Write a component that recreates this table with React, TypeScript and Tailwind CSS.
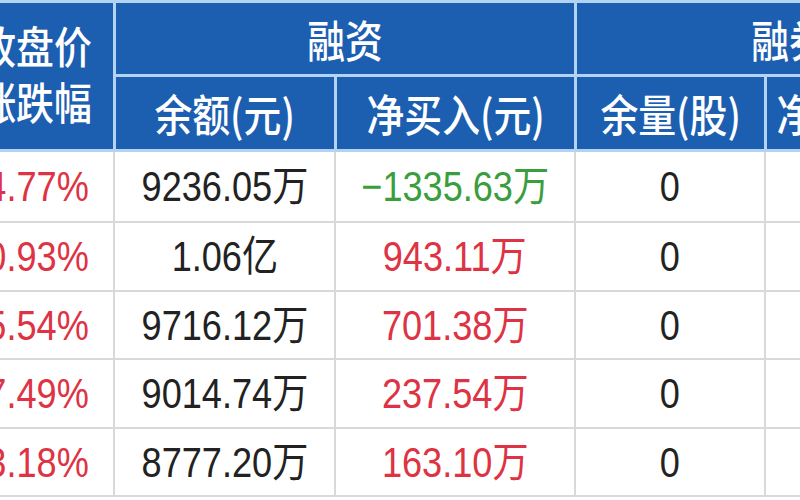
const rows = [
  { pct: "4.77%", bal: "9236.05万", net: "−1335.63万", up: false, qty: "0", h: "h-[69px]" },
  { pct: "0.93%", bal: "1.06亿", net: "943.11万", up: true, qty: "0", h: "h-[67px]" },
  { pct: "5.54%", bal: "9716.12万", net: "701.38万", up: true, qty: "0", h: "h-[66px]" },
  { pct: "7.49%", bal: "9014.74万", net: "237.54万", up: true, qty: "0", h: "h-[67px]" },
  { pct: "3.18%", bal: "8777.20万", net: "163.10万", up: true, qty: "0", h: "h-[66px]" },
];

const head = "bg-[#1c5eb0] flex items-center justify-center text-white";
const headText =
  "inline-block scale-x-[0.86] text-[44px] font-medium font-['Noto_Sans_CJK_SC',sans-serif] whitespace-nowrap";
const cell = "flex items-center justify-center border-r-2 border-[#d9d9d9] shrink-0";
const num =
  "inline-block scale-x-[0.86] text-[42px] whitespace-nowrap font-['Liberation_Sans','Noto_Sans_CJK_SC',sans-serif]";

export default function App() {
  return (
    <div className="w-[800px] h-[500px] overflow-hidden bg-white">
      <div className="ml-[-43px] w-[1200px]">
        {/* header */}
        <div className="flex gap-[3px] bg-[#b3d3f3] pt-[3px] pb-[3px]">
          <div className={`${head} w-[156px] h-[146px] shrink-0 pb-[6px]`}>
            <span className={`${headText} leading-[56px] text-center`}>
              收盘价
              <br />
              涨跌幅
            </span>
          </div>
          <div className="flex flex-col gap-[3px]">
            <div className="flex gap-[3px] h-[71px]">
              <div className={`${head} w-[458px]`}>
                <span className={headText}>融资</span>
              </div>
              <div className={`${head} w-[424px]`}>
                <span className={headText}>融券</span>
              </div>
            </div>
            <div className="flex gap-[3px] h-[72px]">
              <div className={`${head} w-[218px]`}>
                <span className={headText}>余额(元)</span>
              </div>
              <div className={`${head} w-[237px]`}>
                <span className={headText}>净买入(元)</span>
              </div>
              <div className={`${head} w-[187px]`}>
                <span className={headText}>余量(股)</span>
              </div>
              <div className={`${head} w-[198px]`}>
                <span className={headText}>净卖出(股)</span>
              </div>
              <div className={`${head} w-[200px]`}>
                <span className={headText}>余额(元)</span>
              </div>
            </div>
          </div>
        </div>

        {/* data */}
        {rows.map((r, i) => (
          <div key={i} className={`flex border-b-2 border-[#d9d9d9] ${r.h} box-content`}>
            <div className={`${cell} w-[158px] pl-[6px]`}>
              <span className={`${num} text-[#dd3344]`}>{r.pct}</span>
            </div>
            <div className={`${cell} w-[221px]`}>
              <span className={`${num} text-[#222]`}>{r.bal}</span>
            </div>
            <div className={`${cell} w-[240px]`}>
              <span className={`${num} ${r.up ? "text-[#dd3344]" : "text-[#3a9e3e]"}`}>
                {r.net}
              </span>
            </div>
            <div className={`${cell} w-[190px]`}>
              <span className={`${num} text-[#222]`}>{r.qty}</span>
            </div>
            <div className={`${cell} w-[200px]`}>
              <span className={`${num} text-[#222]`}>0</span>
            </div>
          </div>
        ))}
      </div>
    </div>
  );
}
